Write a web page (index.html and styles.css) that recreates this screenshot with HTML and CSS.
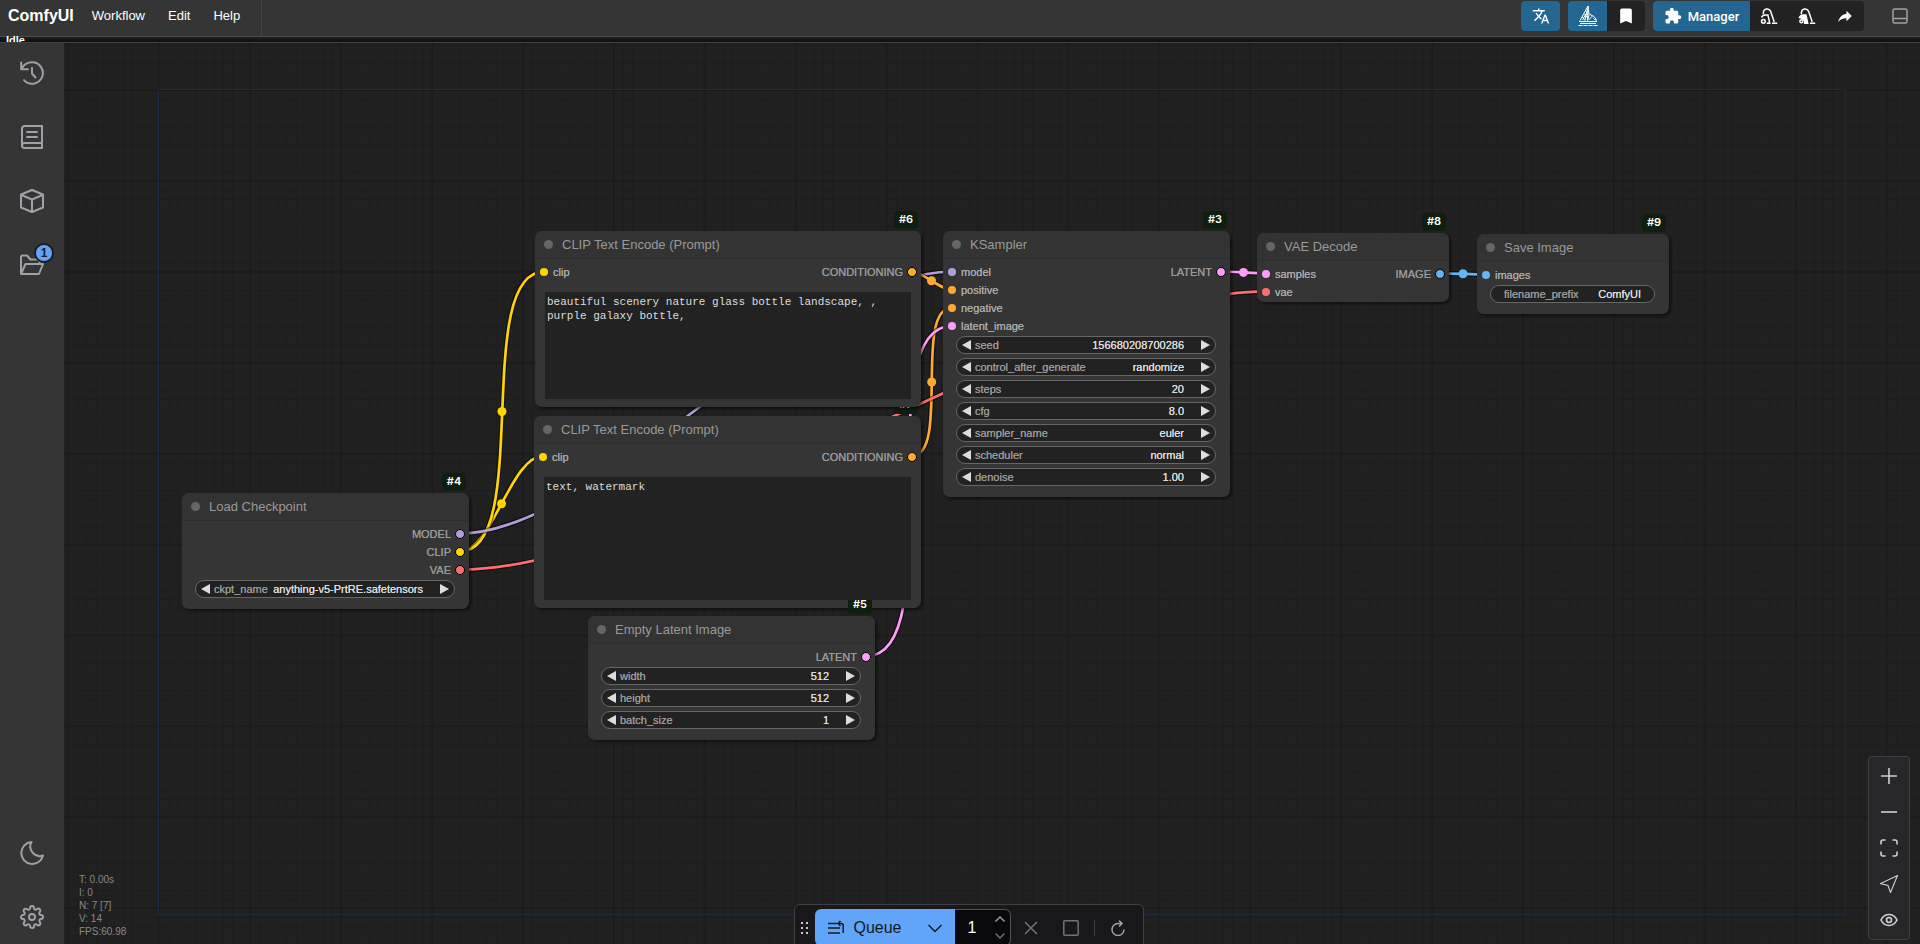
FILE: index.html
```html
<!DOCTYPE html>
<html lang="en">
<head>
<meta charset="utf-8">
<title>ComfyUI</title>
<link rel="stylesheet" href="styles.css">
</head>
<body>
<header class="topbar">
  <h1 class="brand">ComfyUI</h1>
  <nav class="menu">
    <button type="button">Workflow</button>
    <button type="button">Edit</button>
    <button type="button">Help</button>
  </nav>
  <div class="tools">
    <div class="tool-group">
      <button type="button" class="tool tool-blue" aria-label="Translate"><svg class="icon-18" viewBox="0 0 24 24"><path d="M12.87,15.07L10.33,12.56L10.36,12.53C12.1,10.59 13.34,8.36 14.07,6H17V4H10V2H8V4H1V6H12.17C11.5,7.92 10.44,9.75 9,11.35C8.07,10.32 7.3,9.19 6.69,8H4.69C5.42,9.63 6.42,11.17 7.67,12.56L2.58,17.58L4,19L9,14L12.11,17.11L12.87,15.07M18.5,10H16.5L12,22H14L15.12,19H19.87L21,22H23L18.5,10M15.88,17L17.5,12.67L19.12,17H15.88Z"/></svg></button>
    </div>
    <div class="tool-group">
      <button type="button" class="tool tool-blue" aria-label="Models"><svg class="icon-20 line" viewBox="0 0 20 20"><path d="M10 0L2 14.500M10 0L9.500 14.500M10 0l1 9M9.500 3L7 14M9.500 5.500L4.500 14M8 5l1.500 3.500M6.500 8l3 4M4.500 11l2.500 3.500M11 9l-1.500 5.500M12 7.500l2 3-3.500 3.500M14 9.500c2 .5 4 3 4.500 5l-3-2M1 15.500h18M2 17.500h16"/><path d="M.5 19.500h19" stroke-width="1" stroke-dasharray="4 1"/></svg></button>
      <button type="button" class="tool" aria-label="Bookmark"><svg class="icon-20" viewBox="0 0 24 24"><path d="M17,3H7A2,2 0 0,0 5,5V21L12,18L19,21V5C19,3.890 18.100,3 17,3Z"/></svg></button>
    </div>
    <div class="tool-group">
      <button type="button" class="tool tool-blue tool-manager"><svg class="icon-18" viewBox="0 0 24 24"><path d="M20.5,11H19V7C19,5.89 18.1,5 17,5H13V3.5A2.5,2.5 0 0,0 10.5,1A2.5,2.5 0 0,0 8,3.5V5H4A2,2 0 0,0 2,7V10.8H3.5C5,10.8 6.2,12 6.2,13.5C6.2,15 5,16.2 3.5,16.2H2V20A2,2 0 0,0 4,22H7.8V20.5C7.8,19 9,17.8 10.5,17.8C12,17.8 13.2,19 13.2,20.5V22H17A2,2 0 0,0 19,20V16H20.5A2.5,2.5 0 0,0 23,13.5A2.5,2.5 0 0,0 20.5,11Z"/></svg>Manager</button>
      <button type="button" class="tool" aria-label="Unload models"><svg class="icon-18 vacuum" viewBox="0 0 24 24"><path d="M4.500 9.500V7a5 5 0 0 1 9.500-1.500L19 20M16 21.500h7M2 14C3 11.500 5 10.500 7 10.500h3.500L13 21.500H9"/><circle cx="4.500" cy="19" r="2.500"/></svg></button>
      <button type="button" class="tool" aria-label="Free cache"><svg class="icon-18 vacuum" viewBox="0 0 24 24"><path d="M4.500 9.500V7a5 5 0 0 1 9.500-1.500L19 20M16 21.500h7"/><path class="solid" d="M2 14C3 11.500 5 10.500 7 10.500h3.500L13 21.500H9c1-4-3-7-7-7.500Z"/><circle cx="4.500" cy="19" r="2"/></svg></button>
      <button type="button" class="tool" aria-label="Share"><svg class="icon-18" viewBox="0 0 24 24"><path d="M21,12L14,5V9C7,10 4,15 3,20C5.5,16.5 9,14.9 14,14.9V19L21,12Z"/></svg></button>
    </div>
    <button type="button" class="panel-toggle" aria-label="Toggle bottom panel"><svg class="icon-16 line" viewBox="0 0 16 16"><rect x="1" y="1" width="14" height="14" rx="1.500"/><path d="M1 10.500h14"/></svg></button>
  </div>
</header>
<div class="status"><span>Idle</span></div>

<main class="workspace">
  <aside class="sidebar">
    <button type="button" aria-label="Queue history"><svg viewBox="0 0 24 24"><path d="M1.200 1.500v6.700h6.700M1.700 7.500C3.500 4 7 1.200 12 1.200a10.800 10.800 0 1 1-8 18M12 7v5.500l3.500 4"/></svg></button>
    <button type="button" aria-label="Node library"><svg viewBox="0 0 24 24"><path d="M22 18H4.500a2.500 2.500 0 0 0 0 5H22V1H4.500A2.500 2.500 0 0 0 2 3.500v17M7 7h10M7 12h10"/></svg></button>
    <button type="button" aria-label="Model library"><svg viewBox="0 0 24 24"><path d="M12 1l11 4.500v13L12 23 1 18.500v-13zM1.500 6L12 10.500 22.500 6M12 10.500V23"/></svg></button>
    <button type="button" aria-label="Workflows"><svg viewBox="0 0 24 24"><path d="M1 21V4a1.500 1.500 0 0 1 1.500-1.500H7l3.500 4H18a1.500 1.500 0 0 1 1.500 1.500v3M1 21l4.500-10H23l-4 10z"/></svg><span class="badge-count">1</span></button>
    <button type="button" class="push-down" aria-label="Toggle theme"><svg viewBox="0 0 24 24"><path d="M11.500 1A11 11 0 1 0 23 14.500 9.500 9.500 0 0 1 11.500 1z"/></svg></button>
    <button type="button" aria-label="Settings"><svg viewBox="0 0 24 24"><circle cx="12" cy="12" r="3"/><path d="M19.4 15a1.65 1.65 0 0 0 .33 1.82l.06.06a2 2 0 0 1 0 2.83 2 2 0 0 1-2.83 0l-.06-.06a1.65 1.65 0 0 0-1.82-.33 1.65 1.65 0 0 0-1 1.51V21a2 2 0 0 1-2 2 2 2 0 0 1-2-2v-.09A1.65 1.65 0 0 0 9 19.4a1.65 1.65 0 0 0-1.82.33l-.06.06a2 2 0 0 1-2.83 0 2 2 0 0 1 0-2.83l.06-.06a1.65 1.65 0 0 0 .33-1.82 1.65 1.65 0 0 0-1.51-1H3a2 2 0 0 1-2-2 2 2 0 0 1 2-2h.09A1.65 1.65 0 0 0 4.6 9a1.65 1.65 0 0 0-.33-1.82l-.06-.06a2 2 0 0 1 0-2.83 2 2 0 0 1 2.83 0l.06.06a1.65 1.65 0 0 0 1.82.33H9a1.65 1.65 0 0 0 1-1.51V3a2 2 0 0 1 2-2 2 2 0 0 1 2 2v.09a1.65 1.65 0 0 0 1 1.51 1.65 1.65 0 0 0 1.82-.33l.06-.06a2 2 0 0 1 2.83 0 2 2 0 0 1 0 2.83l-.06.06a1.65 1.65 0 0 0-.33 1.82V9a1.65 1.65 0 0 0 1.51 1H21a2 2 0 0 1 2 2 2 2 0 0 1-2 2h-.09a1.65 1.65 0 0 0-1.51 1z"/></svg></button>
  </aside>

  <section class="canvas" aria-label="Workflow graph">
    <svg class="wires" aria-hidden="true">
      <defs>
        <pattern id="minor" width="10" height="10" patternUnits="userSpaceOnUse" patternTransform="translate(4.500 47) scale(.90909)"><path d="M0 .5H10M.5 0V10" stroke="#1d1d1d" stroke-width="1.100"/></pattern>
        <pattern id="major" width="100" height="100" patternUnits="userSpaceOnUse" patternTransform="translate(3.500 46) scale(.90909)"><path d="M0 1H100M1 0V100" stroke="#1a1a1a" stroke-width="1.600"/></pattern>
      </defs>
      <rect width="100%" height="100%" fill="url(#minor)"/>
      <rect width="100%" height="100%" fill="url(#major)"/>
      <g transform="translate(-64 -43)" fill="none">
        <rect x="158.500" y="89.500" width="1687" height="825" stroke="#1f2a44"/>
        <g class="link clip"><path d="M460 551.500C492 551.500 511 456 543 456"/><path d="M460 551.500C492 551.500 511 456 543 456"/><circle cx="501.500" cy="503.700" r="4.500"/></g>
        <g class="link clip"><path d="M460 551.500C533 551.500 471.500 271.500 544.500 271.500"/><path d="M460 551.500C533 551.500 471.500 271.500 544.500 271.500"/><circle cx="502" cy="411.500" r="4.500"/></g>
        <g class="link model"><path d="M460 533.500C599 533.500 812.500 271.500 951.500 271.500"/><path d="M460 533.500C599 533.500 812.500 271.500 951.500 271.500"/></g>
        <g class="link cond"><path d="M911.500 271.500C922.500 271.500 940.500 290 951.500 290"/><path d="M911.500 271.500C922.500 271.500 940.500 290 951.500 290"/><circle cx="931.500" cy="280.700" r="4.500"/></g>
        <g class="link cond"><path d="M912 456C950 456 913.500 308 951.500 308"/><path d="M912 456C950 456 913.500 308 951.500 308"/><circle cx="931.700" cy="382" r="4.500"/></g>
        <g class="link latent"><path d="M866.500 656C951.500 656 866.500 326 951.500 326"/><path d="M866.500 656C951.500 656 866.500 326 951.500 326"/></g>
        <g class="link latent"><path d="M1221 271.500C1232 271.500 1255 273.300 1266 273.300"/><path d="M1221 271.500C1232 271.500 1255 273.300 1266 273.300"/><circle cx="1243.500" cy="272.400" r="4.500"/></g>
        <g class="link vae"><path d="M460 569.700C673 569.700 1053 291.400 1266 291.400"/><path d="M460 569.700C673 569.700 1053 291.400 1266 291.400"/></g>
        <g class="link image"><path d="M1440 273.300C1451 273.300 1475 274.500 1486 274.500"/><path d="M1440 273.300C1451 273.300 1475 274.500 1486 274.500"/><circle cx="1463" cy="273.800" r="4.500"/></g>
      </g>
    </svg>

    <article class="node node-7">
      <span class="node-id">#7</span>
      <h2>CLIP Text Encode (Prompt)</h2>
      <div class="slots">
        <div class="slot"><span class="in clip">clip</span><span class="out cond">CONDITIONING</span></div>
      </div>
      <textarea class="prompt prompt-tall" aria-label="Negative prompt" spellcheck="false">text, watermark</textarea>
    </article>

    <article class="node node-6">
      <span class="node-id">#6</span>
      <h2>CLIP Text Encode (Prompt)</h2>
      <div class="slots">
        <div class="slot"><span class="in clip">clip</span><span class="out cond">CONDITIONING</span></div>
      </div>
      <textarea class="prompt" aria-label="Positive prompt" spellcheck="false">beautiful scenery nature glass bottle landscape, , purple galaxy bottle,</textarea>
    </article>

    <article class="node node-5">
      <span class="node-id">#5</span>
      <h2>Empty Latent Image</h2>
      <div class="slots">
        <div class="slot"><span class="out latent">LATENT</span></div>
      </div>
      <div class="widgets">
        <div class="widget"><button type="button" class="prev" aria-label="Decrease width"></button><label for="width">width</label><input id="width" value="512"><button type="button" class="next" aria-label="Increase width"></button></div>
        <div class="widget"><button type="button" class="prev" aria-label="Decrease height"></button><label for="height">height</label><input id="height" value="512"><button type="button" class="next" aria-label="Increase height"></button></div>
        <div class="widget"><button type="button" class="prev" aria-label="Decrease batch size"></button><label for="batch">batch_size</label><input id="batch" value="1"><button type="button" class="next" aria-label="Increase batch size"></button></div>
      </div>
    </article>

    <article class="node node-4">
      <span class="node-id">#4</span>
      <h2>Load Checkpoint</h2>
      <div class="slots">
        <div class="slot"><span class="out model">MODEL</span></div>
        <div class="slot"><span class="out clip">CLIP</span></div>
        <div class="slot"><span class="out vae">VAE</span></div>
      </div>
      <div class="widgets">
        <div class="widget"><button type="button" class="prev" aria-label="Previous checkpoint"></button><label for="ckpt">ckpt_name</label><select id="ckpt"><option>anything-v5-PrtRE.safetensors</option></select><button type="button" class="next" aria-label="Next checkpoint"></button></div>
      </div>
    </article>

    <article class="node node-3">
      <span class="node-id">#3</span>
      <h2>KSampler</h2>
      <div class="slots">
        <div class="slot"><span class="in model">model</span><span class="out latent">LATENT</span></div>
        <div class="slot"><span class="in cond">positive</span></div>
        <div class="slot"><span class="in cond">negative</span></div>
        <div class="slot"><span class="in latent">latent_image</span></div>
      </div>
      <div class="widgets">
        <div class="widget"><button type="button" class="prev" aria-label="Decrease seed"></button><label for="seed">seed</label><input id="seed" value="156680208700286"><button type="button" class="next" aria-label="Increase seed"></button></div>
        <div class="widget"><button type="button" class="prev" aria-label="Previous mode"></button><label for="control">control_after_generate</label><select id="control"><option>randomize</option></select><button type="button" class="next" aria-label="Next mode"></button></div>
        <div class="widget"><button type="button" class="prev" aria-label="Decrease steps"></button><label for="steps">steps</label><input id="steps" value="20"><button type="button" class="next" aria-label="Increase steps"></button></div>
        <div class="widget"><button type="button" class="prev" aria-label="Decrease cfg"></button><label for="cfg">cfg</label><input id="cfg" value="8.0"><button type="button" class="next" aria-label="Increase cfg"></button></div>
        <div class="widget"><button type="button" class="prev" aria-label="Previous sampler"></button><label for="sampler">sampler_name</label><select id="sampler"><option>euler</option></select><button type="button" class="next" aria-label="Next sampler"></button></div>
        <div class="widget"><button type="button" class="prev" aria-label="Previous scheduler"></button><label for="scheduler">scheduler</label><select id="scheduler"><option>normal</option></select><button type="button" class="next" aria-label="Next scheduler"></button></div>
        <div class="widget"><button type="button" class="prev" aria-label="Decrease denoise"></button><label for="denoise">denoise</label><input id="denoise" value="1.00"><button type="button" class="next" aria-label="Increase denoise"></button></div>
      </div>
    </article>

    <article class="node node-8">
      <span class="node-id">#8</span>
      <h2>VAE Decode</h2>
      <div class="slots">
        <div class="slot"><span class="in latent">samples</span><span class="out image">IMAGE</span></div>
        <div class="slot"><span class="in vae">vae</span></div>
      </div>
    </article>

    <article class="node node-9">
      <span class="node-id">#9</span>
      <h2>Save Image</h2>
      <div class="slots">
        <div class="slot"><span class="in image">images</span></div>
      </div>
      <div class="widgets">
        <div class="widget widget-text"><label for="prefix">filename_prefix</label><input id="prefix" value="ComfyUI"></div>
      </div>
    </article>

    <ul class="stats">
      <li>T: 0.00s</li>
      <li>I: 0</li>
      <li>N: 7 [7]</li>
      <li>V: 14</li>
      <li>FPS:60.98</li>
    </ul>

    <div class="view-controls">
      <button type="button" aria-label="Zoom in"><svg viewBox="0 0 18 18"><path d="M9 1v16M1 9h16"/></svg></button>
      <button type="button" aria-label="Zoom out"><svg viewBox="0 0 18 18"><path d="M1 9h16"/></svg></button>
      <button type="button" aria-label="Fit view"><svg viewBox="0 0 18 18"><path d="M1 5.500V3a2 2 0 0 1 2-2h2.500M12.500 1H15a2 2 0 0 1 2 2v2.500M17 12.500V15a2 2 0 0 1-2 2h-2.500M5.500 17H3a2 2 0 0 1-2-2v-2.500"/></svg></button>
      <button type="button" aria-label="Select mode"><svg viewBox="0 0 18 18"><path class="thin" d="M17.500.5L.5 8.500l7.500 2 2.500 7z"/></svg></button>
      <button type="button" aria-label="Toggle link visibility"><svg viewBox="0 0 18 18"><path d="M1 9c2-4 5-5.500 8-5.500S15 5 17 9c-2 4-5 5.500-8 5.500S3 13 1 9z"/><circle cx="9" cy="9" r="2.500"/></svg></button>
    </div>

    <div class="actionbar">
      <svg class="grip" viewBox="0 0 8 12" aria-hidden="true"><path d="M0 0h2v2H0zM5 0h2v2H5zM0 5h2v2H0zM5 5h2v2H5zM0 10h2v2H0zM5 10h2v2H5z"/></svg>
      <div class="queue">
        <button type="button" class="queue-run"><svg class="icon-16 line" viewBox="0 0 16 16"><path d="M0 3.500h9M0 8h12M0 13h12M15.200 13V5.500a2 2 0 0 0-2-2H10M12.500 1L10 3.500 12.500 6"/></svg>Queue</button>
        <button type="button" class="queue-more" aria-label="Queue options"><svg class="icon-16 line" viewBox="0 0 16 16"><path d="M1.500 5L8 11.500 14.500 5"/></svg></button>
        <div class="batch">
          <input aria-label="Batch count" value="1">
          <div class="spin">
            <button type="button" aria-label="Increase batch count"><svg viewBox="0 0 10 6"><path d="M.5 5.500L5 1l4.500 4.500"/></svg></button>
            <button type="button" aria-label="Decrease batch count"><svg class="dim" viewBox="0 0 10 6"><path d="M.5.5L5 5 9.500.5"/></svg></button>
          </div>
        </div>
      </div>
      <button type="button" class="action dim" aria-label="Interrupt"><svg class="icon-16 line" viewBox="0 0 16 16"><path d="M2 2l12 12M14 2L2 14"/></svg></button>
      <button type="button" class="action dim" aria-label="Clear queue"><svg class="icon-16 line" viewBox="0 0 16 16"><rect x=".8" y=".8" width="14.400" height="14.400" rx="1"/></svg></button>
      <span class="divider"></span>
      <button type="button" class="action" aria-label="Refresh"><svg class="icon-16 line" viewBox="0 0 16 16"><path d="M8 3.500h4M9 .5l3 3-3 3M8.500 3.500H8a6 6 0 1 0 6 6"/></svg></button>
    </div>
  </section>
</main>
</body>
</html>
```
FILE: styles.css
```css
* { box-sizing: border-box; }

body {
  margin: 0;
  height: 100vh;
  display: flex;
  flex-direction: column;
  overflow: hidden;
  background: #202020;
  color: #fff;
  font-family: "Liberation Sans", Arial, sans-serif;
  font-size: 11px;
}

button, input, select, textarea {
  margin: 0;
  padding: 0;
  border: 0;
  background: none;
  color: inherit;
  font: inherit;
  outline: 0;
  appearance: none;
}

button {
  display: flex;
  align-items: center;
  justify-content: center;
}

svg { display: block; fill: currentColor; }
.icon-16 { width: 16px; height: 16px; }
.icon-18 { width: 18px; height: 18px; }
.icon-20 { width: 20px; height: 20px; }
.line { fill: none; stroke: currentColor; }

/* Top bar */
.topbar {
  flex: none;
  display: flex;
  align-items: center;
  height: 36px;
  padding: 0 0 4px 8px;
  background: #353535;
}
.brand { margin: 0; font-size: 16px; line-height: 20px; }
.menu {
  display: flex;
  align-self: stretch;
  gap: 23px;
  margin-bottom: -4px;
  padding: 0 21px 6px 18px;
  border-right: 1px solid #43434a;
  font-size: 13px;
  text-shadow: 0 0 0 currentColor;
}
.tools { display: flex; align-items: center; gap: 8px; margin-left: auto; }
.tool-group { display: flex; overflow: hidden; border-radius: 4px; background: #222; }
.tool { width: 38px; height: 30px; }
.tool-blue { width: 39px; background: #236692; }
.tool-manager {
  width: 97px;
  gap: 6px;
  font-family: Roboto, sans-serif;
  font-size: 13px;
  font-weight: 500;
}
.vacuum { fill: none; stroke: currentColor; stroke-width: 2; }
.vacuum .solid { fill: currentColor; }
.panel-toggle { width: 40px; height: 32px; margin-left: 8px; color: #a0a0a8; }
.panel-toggle svg { stroke-width: 1.500; }

.status {
  flex: none;
  height: 7px;
  overflow: hidden;
  padding-left: 6px;
  border-bottom: 1px solid #444;
  background: linear-gradient(#4e4e4e 1px, #1f1f1f 1px, #0e0e0e);
  font-weight: bold;
  line-height: 8px;
}

/* Side bar */
.workspace { flex: 1; display: flex; min-height: 0; }
.sidebar {
  flex: none;
  display: flex;
  flex-direction: column;
  gap: 10px;
  width: 64px;
  padding-top: 3px;
  background: #353535;
  color: #a0a0a8;
}
.sidebar button { position: relative; height: 54px; }
.sidebar .push-down { margin-top: auto; }
.sidebar svg { width: 24px; height: 24px; fill: none; stroke: currentColor; stroke-width: 2; stroke-linejoin: round; stroke-linecap: round; }
.badge-count {
  position: absolute;
  top: 5px;
  right: 10px;
  width: 20px;
  height: 20px;
  border: 2px solid #1c1c1f;
  border-radius: 50%;
  background: #60a5fa;
  color: #18181b;
  font-size: 12px;
  font-weight: bold;
  line-height: 16px;
}

/* Graph canvas */
.canvas { position: relative; flex: 1; overflow: hidden; background: #212121; }
.wires { position: absolute; inset: 0; width: 100%; height: 100%; }
.model { --c: #b39ddb; }
.clip { --c: #ffd500; }
.vae { --c: #ff6e6e; }
.cond { --c: #ffa931; }
.latent { --c: #ff9cf9; }
.image { --c: #64b5f6; }
.link path { stroke: var(--c); stroke-width: 2.700; }
.link path:first-child { stroke: #000; stroke-opacity: .5; stroke-width: 5; }
.link circle { fill: var(--c); }

.node {
  position: absolute;
  width: 287px;
  border-radius: 7px;
  background: #353535;
  box-shadow: 2px 2px 3px rgba(0, 0, 0, .5);
}
.node-7 { left: 470px; top: 373px; width: 387px; }
.node-6 { left: 471px; top: 188px; width: 386px; }
.node-5 { left: 524px; top: 573px; }
.node-4 { left: 118px; top: 450px; }
.node-3 { left: 879px; top: 188px; }
.node-8 { left: 1193px; top: 190px; width: 192px; }
.node-9 { left: 1413px; top: 191px; width: 192px; }

.node h2 {
  display: flex;
  align-items: center;
  gap: 9px;
  height: 28px;
  margin: 0;
  padding-left: 9px;
  border-bottom: 1px solid #2e2e2e;
  border-radius: 7px 7px 0 0;
  background: #333;
  color: #999;
  font-size: 13px;
  font-weight: normal;
}
.node h2::before { content: ""; width: 9px; height: 9px; border-radius: 50%; background: #666; }
.node-id {
  position: absolute;
  right: 3px;
  bottom: 100%;
  width: 24px;
  height: 18px;
  margin-bottom: 2px;
  border-radius: 4px;
  background: #0f1f0f;
  font-family: Inter, "Noto Sans", sans-serif;
  font-weight: 600;
  line-height: 17px;
  text-align: center;
}

.slots { padding: 4px 4px 1px 5px; color: #aaa; text-shadow: 0 0 0 currentColor; }
.slot { display: flex; justify-content: space-between; height: 18px; line-height: 18px; }
.in, .out { display: flex; align-items: center; gap: 5px; }
.out { gap: 4px; margin-left: auto; color: #999; }
.in::before, .out::after { content: ""; width: 8px; height: 8px; border-radius: 50%; background: var(--c); }
.out::after { border: 1px solid #000; }

.widgets { display: flex; flex-direction: column; gap: 4px; padding: 0 14px 11px 13px; }
.widget {
  display: flex;
  align-items: center;
  height: 18px;
  padding: 0 5px;
  border: 1px solid #666;
  border-radius: 9px;
  background: #222;
  color: #999;
  text-shadow: 0 0 0 currentColor;
}
.widget label { margin-left: 4px; }
.widget input, .widget select {
  flex: 1;
  min-width: 0;
  margin-right: 17px;
  color: #ddd;
  text-align: right;
  text-align-last: right;
  text-shadow: 0 0 0 currentColor;
}
.widget-text { padding: 0 13px; }
.widget-text label { margin-left: 0; }
.widget-text input { margin-right: 0; }
.prev, .next { flex: none; width: 9px; height: 10px; background: #ddd; }
.prev { clip-path: polygon(0 50%, 100% 0, 100% 100%); }
.next { clip-path: polygon(0 0, 100% 50%, 0 100%); }

.node-6, .node-7 { padding-bottom: 8px; }
.prompt {
  position: relative;
  z-index: 1;
  display: block;
  width: calc(100% - 20px);
  height: 107px;
  margin: 10px 10px 0;
  padding: 3px 2px;
  background: #222;
  color: #ddd;
  font-family: "Liberation Mono", monospace;
  line-height: 14px;
  resize: none;
}
.prompt-tall { height: 123px; }

/* Overlays on the canvas */
.stats {
  position: absolute;
  left: 15px;
  bottom: 6px;
  margin: 0;
  padding: 0;
  color: #888;
  font-size: 10px;
  line-height: 13px;
  list-style: none;
}
.view-controls {
  position: absolute;
  right: 10px;
  bottom: 4px;
  display: flex;
  flex-direction: column;
  width: 42px;
  padding: 1px 0;
  border: 1px solid #3f3f46;
  border-radius: 4px;
  background: #27272a;
  color: #d0d0d4;
}
.view-controls button { height: 36px; }
.view-controls svg { width: 18px; height: 18px; fill: none; stroke: currentColor; stroke-width: 1.600; }
.view-controls .thin { stroke-width: 1.100; }

.actionbar {
  position: absolute;
  left: 730px;
  bottom: -7px;
  display: flex;
  align-items: center;
  width: 350px;
  height: 47px;
  padding: 0 4px 0 6px;
  border: 1px solid #3f3f46;
  border-radius: 6px;
  background: #18181b;
}
.grip { width: 8px; height: 12px; margin-right: 6px; fill: #c8c8c8; }
.queue { display: flex; height: 37px; color: #18181b; font-size: 16px; }
.queue-run { width: 100px; gap: 9px; border-radius: 6px 0 0 6px; background: #60a5fa; }
.queue-more { width: 40px; background: #60a5fa; }
.queue .line { stroke-width: 1.500; }
.batch {
  display: flex;
  width: 56px;
  border: 1px solid #52525b;
  border-left: 0;
  border-radius: 0 6px 6px 0;
  background: #09090b;
  color: #fff;
}
.batch input { width: 34px; text-align: center; }
.spin { display: flex; flex-direction: column; flex: 1; color: #a1a1aa; }
.spin button { flex: 1; }
.spin svg { width: 10px; height: 6px; fill: none; stroke: currentColor; stroke-width: 1.400; }
.dim { color: #71717a; }
.action { width: 40px; height: 36px; color: #a1a1aa; }
.action.dim { color: #71717a; }
.action .line { stroke-width: 1.500; }
.divider { width: 1px; height: 16px; margin: 0 3px; background: #3f3f46; }
```
